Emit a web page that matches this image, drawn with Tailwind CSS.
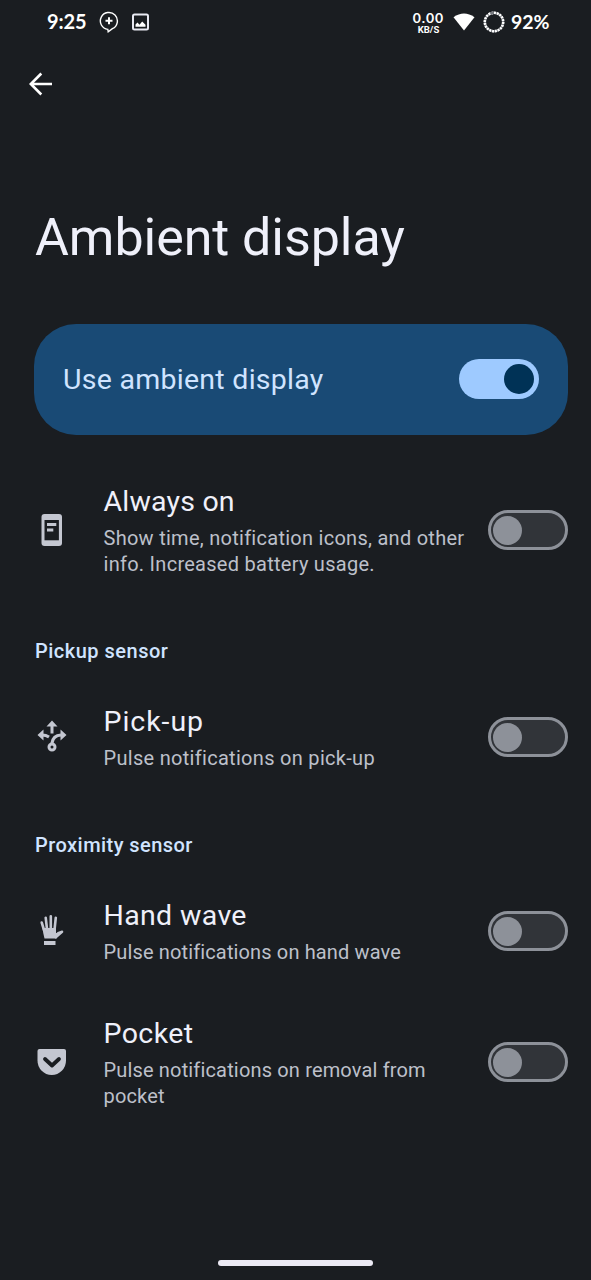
<!DOCTYPE html>
<html lang="en">
<head>
<meta charset="utf-8">
<title>Ambient display</title>
<script src="https://cdn.jsdelivr.net/npm/@tailwindcss/browser@4"></script>
</head>
<body class="bg-[#1a1d21]">
<div class="flex h-[1280px] w-[591px] flex-col overflow-hidden bg-[#1a1d21] font-['Roboto',sans-serif] text-[#eff0fa]">
  <header class="flex h-11 shrink-0 items-center justify-between pl-[46px] pr-[41px] text-white">
    <div class="flex items-center">
      <span class="w-[53px] whitespace-nowrap pb-0.5 pl-px font-['Lato',sans-serif] text-[20px] font-bold leading-6 tracking-[-0.1px]">9:25</span>
      <svg class="h-[22px] w-5" viewBox="0 0 20 22" fill="none" stroke="currentColor"><path stroke-width="1.4" d="M8.8 18.4A8.5 8.5 0 1 1 13.4 17.7L9.2 20.8Z"/><path stroke-width="2" d="M10 6.3v7M6.5 9.8h7"/></svg>
      <svg class="ml-[13px] h-[18px] w-[17px]" viewBox="0 0 17 18" fill="none"><rect x="1" y="1.5" width="15" height="15" rx="1.5" stroke="#e8e9f2" stroke-width="2"/><path fill="#fff" d="M3.5 13.7v-2.2l2-2 2 2.2 2.7-3.2 3.3 3.2v2z"/></svg>
    </div>
    <div class="flex items-center">
      <div class="flex w-[33px] flex-col items-center whitespace-nowrap pt-0.5 font-bold">
        <span class="font-['Lato',sans-serif] text-[14px] leading-3 tracking-[0.9px]">0.00</span>
        <span class="text-[9.5px] leading-[11px]">KB/S</span>
      </div>
      <svg class="ml-2 h-[18px] w-[22px]" viewBox="0 0 22 18" fill="#fff"><path d="M.5 4.2Q11-3.3 21.5 4.2L11 17.5Z"/></svg>
      <svg class="ml-2 size-[22px]" viewBox="0 0 22 22" fill="none"><circle cx="11" cy="11" r="9.2" stroke="#777a80" stroke-width="2.4"/><circle cx="11" cy="11" r="9.2" stroke="#fff" stroke-width="2.6" stroke-dasharray="2 .89" pathLength="57.8"/><path d="M7.5 2.5Q9 1.8 11 1.8" stroke="#777a80" stroke-width="2.6"/></svg>
      <span class="ml-1.5 w-[39px] whitespace-nowrap font-['Lato',sans-serif] text-[19.5px] font-bold leading-6">92%</span>
    </div>
  </header>

  <div class="flex h-20 shrink-0 items-center pl-[29px]">
    <svg class="h-6 w-6" viewBox="0 0 24 24" fill="none" stroke="#fff" stroke-width="2.6"><path d="M12.3 1.5 1.8 12l10.5 10.5M2 12h21"/></svg>
  </div>

  <h1 class="mt-[82px] h-[68px] shrink-0 whitespace-nowrap pl-[35px] text-[52px] font-normal leading-[64px] tracking-[-0.06px]">Ambient display</h1>

  <main class="mt-[50px] flex flex-col pl-[35px] pr-[23px]">
    <div class="-ml-px flex h-[111px] items-center justify-between rounded-[42px] bg-[#194a75] pb-px pl-[29px] pr-[29px]">
      <span class="whitespace-nowrap pt-0.5 text-[28.5px] leading-9 tracking-[0.27px] text-[#d0e4ff]">Use ambient display</span>
      <div class="flex h-10 w-20 items-center justify-end rounded-full bg-[#9ecaff] pr-[5px]"><div class="size-[30px] rounded-full bg-[#003256]"></div></div>
    </div>

    <div class="mt-[23px] flex h-36 items-center">
      <svg class="h-9 w-[34px] shrink-0" viewBox="0 0 34 36"><rect x="6.5" y="2" width="20.5" height="32" rx="3" fill="#c4c7d1"/><path fill="#1a1d21" d="M9.5 8h14.4v20.3H9.5z"/><path fill="#c4c7d1" d="M12 11h9.3v2.9H12zM12 16.6h6.3v2.8H12z"/></svg>
      <div class="ml-[34.5px] flex-1 whitespace-nowrap pt-1"><div class="mb-[7px] text-[28.5px] leading-8 tracking-[0.2px]">Always on</div><div class="mb-px text-[20px] leading-[26px] tracking-[0.27px] text-[#bdc0ca]">Show time, notification icons, and other<br>info. Increased battery usage.</div></div>
      <div class="flex h-10 w-20 shrink-0 items-center rounded-full border-3 border-[#8d9199] bg-[#313439] pl-0.5"><div class="size-[29px] rounded-full bg-[#8d9199]"></div></div>
    </div>

    <h2 class="h-[76px] whitespace-nowrap pt-9 text-[20px] font-medium leading-[26px] tracking-[0.5px] text-[#d0e4ff]">Pickup sensor</h2>

    <div class="flex h-[118px] items-center">
      <svg class="h-9 w-[34px] shrink-0" viewBox="0 0 34 36" fill="none" stroke="#c4c7d1" stroke-width="3"><path d="M17 14.5V6M14 18Q11 16 7 16M17 26v-2q1-7.500 9-8"/><circle cx="17" cy="28" r="3"/><path stroke="none" fill="#c4c7d1" d="m11.5 7.5 5.500-6 5.500 6zM8.500 10.500v11L2.500 16zM25.500 10.500v11l6-5.500z"/></svg>
      <div class="ml-[34.5px] flex-1 whitespace-nowrap pt-1"><div class="mb-[7px] text-[28.5px] leading-8 tracking-[0.95px]">Pick-up</div><div class="mb-px text-[20px] leading-[26px] tracking-[0.3px] text-[#bdc0ca]">Pulse notifications on pick-up</div></div>
      <div class="flex h-10 w-20 shrink-0 items-center rounded-full border-3 border-[#8d9199] bg-[#313439] pl-0.5"><div class="size-[29px] rounded-full bg-[#8d9199]"></div></div>
    </div>

    <h2 class="h-[76px] whitespace-nowrap pt-9 text-[20px] font-medium leading-[26px] tracking-[0.45px] text-[#d0e4ff]">Proximity sensor</h2>

    <div class="flex h-[118px] items-center">
      <svg class="h-9 w-[34px] shrink-0" viewBox="0 0 34 36"><path fill="#c4c7d1" d="M9 28h11.500v4H9zM7.500 15h13.500V20L23.500 20.500 21.500 25.500H9.500Q8 20 7.500 15Z"/><path fill="none" stroke="#c4c7d1" stroke-width="2.6" stroke-linecap="round" stroke-linejoin="round" d="M9 17 6.700 9.500M12 16 10.700 4.700M15.800 16V3.200M19.600 16 20.800 4.700M20.500 22.500Q23 19.500 27 18.700L20.700 24.200"/></svg>
      <div class="ml-[34.5px] flex-1 whitespace-nowrap pt-1"><div class="mb-[7px] text-[28.5px] leading-8 tracking-[0.35px]">Hand wave</div><div class="mb-px text-[20px] leading-[26px] tracking-[0.14px] text-[#bdc0ca]">Pulse notifications on hand wave</div></div>
      <div class="flex h-10 w-20 shrink-0 items-center rounded-full border-3 border-[#8d9199] bg-[#313439] pl-0.5"><div class="size-[29px] rounded-full bg-[#8d9199]"></div></div>
    </div>

    <div class="flex h-36 items-center">
      <svg class="h-9 w-[34px] shrink-0" viewBox="0 0 34 36"><path fill="#c4c7d1" d="M4.500 5h24.500q2 0 2 2v9.500a14.250 14.500 0 0 1-28.500 0V7q0-2 2-2z"/><path d="m10 15 7 6.500 7-6.500" fill="none" stroke="#1a1d21" stroke-width="3.8" stroke-linecap="round" stroke-linejoin="round"/></svg>
      <div class="ml-[34.5px] flex-1 whitespace-nowrap pt-1"><div class="mb-[7px] text-[28.5px] leading-8 tracking-[0.4px]">Pocket</div><div class="mb-px text-[20px] leading-[26px] tracking-[0.16px] text-[#bdc0ca]">Pulse notifications on removal from<br>pocket</div></div>
      <div class="flex h-10 w-20 shrink-0 items-center rounded-full border-3 border-[#8d9199] bg-[#313439] pl-0.5"><div class="size-[29px] rounded-full bg-[#8d9199]"></div></div>
    </div>
  </main>

  <div class="mx-auto mb-3.5 mt-auto h-1.5 w-[155px] shrink-0 rounded-full bg-[#eceaf4]"></div>
</div>
</body>
</html>
